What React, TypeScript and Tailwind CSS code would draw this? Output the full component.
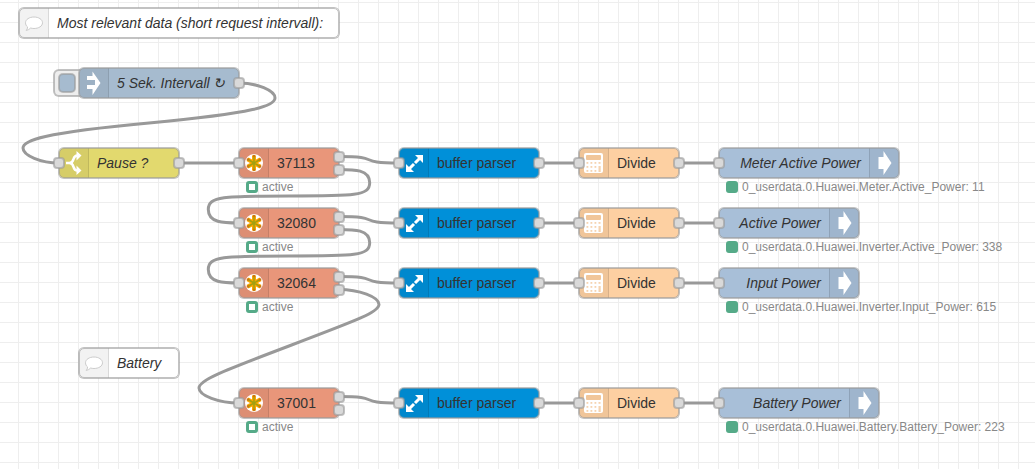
import type { ReactNode } from 'react'
import clsx from 'clsx'

type NodeType = 'comment' | 'inject' | 'switch' | 'knx' | 'parser' | 'calc' | 'out'

type FlowNode = {
  id: string
  type: NodeType
  label: string
  x: number
  y: number
  w: number
  status?: string
}

const NODE_HEIGHT = 30
const PORT_SPACING = 13

const nodes: FlowNode[] = [
  { id: 'c1', type: 'comment', label: 'Most relevant data (short request intervall):', x: 19, y: 8, w: 320 },
  { id: 'inject', type: 'inject', label: '5 Sek. Intervall ↻', x: 79, y: 68, w: 160 },
  { id: 'pause', type: 'switch', label: 'Pause ?', x: 59, y: 148, w: 120 },

  { id: 'k1', type: 'knx', label: '37113', x: 239, y: 148, w: 100, status: 'active' },
  { id: 'p1', type: 'parser', label: 'buffer parser', x: 399, y: 148, w: 140 },
  { id: 'd1', type: 'calc', label: 'Divide', x: 579, y: 148, w: 100 },
  { id: 'o1', type: 'out', label: 'Meter Active Power', x: 719, y: 148, w: 180, status: '0_userdata.0.Huawei.Meter.Active_Power: 11' },

  { id: 'k2', type: 'knx', label: '32080', x: 239, y: 208, w: 100, status: 'active' },
  { id: 'p2', type: 'parser', label: 'buffer parser', x: 399, y: 208, w: 140 },
  { id: 'd2', type: 'calc', label: 'Divide', x: 579, y: 208, w: 100 },
  { id: 'o2', type: 'out', label: 'Active Power', x: 719, y: 208, w: 140, status: '0_userdata.0.Huawei.Inverter.Active_Power: 338' },

  { id: 'k3', type: 'knx', label: '32064', x: 239, y: 268, w: 100, status: 'active' },
  { id: 'p3', type: 'parser', label: 'buffer parser', x: 399, y: 268, w: 140 },
  { id: 'd3', type: 'calc', label: 'Divide', x: 579, y: 268, w: 100 },
  { id: 'o3', type: 'out', label: 'Input Power', x: 719, y: 268, w: 140, status: '0_userdata.0.Huawei.Inverter.Input_Power: 615' },

  { id: 'c2', type: 'comment', label: 'Battery', x: 79, y: 348, w: 100 },

  { id: 'k4', type: 'knx', label: '37001', x: 239, y: 388, w: 100, status: 'active' },
  { id: 'p4', type: 'parser', label: 'buffer parser', x: 399, y: 388, w: 140 },
  { id: 'd4', type: 'calc', label: 'Divide', x: 579, y: 388, w: 100 },
  { id: 'o4', type: 'out', label: 'Battery Power', x: 719, y: 388, w: 160, status: '0_userdata.0.Huawei.Battery.Battery_Power: 223' },
]

// [source, output port, target]
const wires: [string, number, string][] = [
  ['inject', 0, 'pause'],
  ['pause', 0, 'k1'],
  ['k1', 0, 'p1'], ['p1', 0, 'd1'], ['d1', 0, 'o1'],
  ['k1', 1, 'k2'],
  ['k2', 0, 'p2'], ['p2', 0, 'd2'], ['d2', 0, 'o2'],
  ['k2', 1, 'k3'],
  ['k3', 0, 'p3'], ['p3', 0, 'd3'], ['d3', 0, 'o3'],
  ['k3', 1, 'k4'],
  ['k4', 0, 'p4'], ['p4', 0, 'd4'], ['d4', 0, 'o4'],
]

const types: Record<NodeType, { bg: string; inputs: number; outputs: number; italic?: boolean; alignRight?: boolean }> = {
  comment: { bg: 'bg-white', inputs: 0, outputs: 0, italic: true },
  inject: { bg: 'bg-[#a6bbcf]', inputs: 0, outputs: 1, italic: true },
  switch: { bg: 'bg-[#e2d96e]', inputs: 1, outputs: 1, italic: true },
  knx: { bg: 'bg-[#e9967a]', inputs: 1, outputs: 2 },
  parser: { bg: 'bg-[#0090d9]', inputs: 1, outputs: 1 },
  calc: { bg: 'bg-[#fdd0a2]', inputs: 1, outputs: 1 },
  out: { bg: 'bg-[#a8bfd8]', inputs: 1, outputs: 0, italic: true, alignRight: true },
}

const icons: Record<NodeType, ReactNode> = {
  comment: (
    <path
      d="M15 9c4.700 0 8.500 2.500 8.500 5.800S19.700 20.500 15 20.500c-1.200 0-2.300-.2-3.300-.5-1.200 1.300-2.700 2-4.500 2.500.9-1 1.300-2 1.400-3.500C7.300 18 6.500 16.500 6.500 14.800 6.500 11.500 10.300 9 15 9z"
      fill="#fff" stroke="#ccc"
    />
  ),
  inject: <path d="M8 8h5.500V3.500l8 11.500-8 12V21H8v-4h8v-5H8z" fill="#fff" />,
  switch: (
    <>
      <path d="M7 15h4M10.500 15c6-.5 2-7.500 8-7.500M10.500 15c6 .5 2 7.500 8 7.500" fill="none" stroke="#fff" strokeWidth="2.500" />
      <path d="M17.500 3l5 4.500-5 5zM17.500 17.500l5 5-5 4.500z" fill="#fff" />
    </>
  ),
  knx: (
    <>
      <circle cx="15" cy="15" r="9" fill="#fff" />
      <path d="M15 7.500v15M8.500 11.200l13 7.600M21.500 11.200l-13 7.600" stroke="#ffa500" strokeWidth="4" />
      <path d="M15 8v14M9 11.500l12 7M21 11.500l-12 7" stroke="#a0a010" strokeWidth="1.500" />
      <g fill="#c87814">
        <circle cx="15" cy="8" r="1.300" /><circle cx="15" cy="22" r="1.300" />
        <circle cx="9" cy="11.500" r="1.300" /><circle cx="21" cy="11.500" r="1.300" />
        <circle cx="9" cy="18.500" r="1.300" /><circle cx="21" cy="18.500" r="1.300" />
      </g>
    </>
  ),
  parser: (
    <>
      <path d="M16 7h8v8zM7 16v8h8z" fill="#fff" />
      <path d="M21 10l-5 5M15 16l-5 5" stroke="#fff" strokeWidth="3" />
    </>
  ),
  calc: (
    <>
      <rect x="5" y="5" width="19" height="20" rx="2" fill="#fff" />
      <rect x="7" y="7" width="15" height="5" rx="1" fill="#f1c69a" />
      <g fill="#f5d3b0">
        {[14, 18, 22].map(y => [7.5, 11.5, 15.5].map(x => <rect key={`${x}-${y}`} x={x} y={y} width="1.800" height="1.800" />))}
        <rect x="19.500" y="14" width="2" height="1.800" />
        <rect x="19.500" y="18" width="2.200" height="6" />
      </g>
    </>
  ),
  out: <path d="M8.500 9h5V3l8 12-8 12v-6h-5z" fill="#fff" />,
}

// Forward wires are one bezier, backward ones loop round through the midpoint
function linkPath(x1: number, y1: number, x2: number, y2: number) {
  const dx = x2 - x1
  const dy = y2 - y1
  const delta = Math.hypot(dx, dy)

  if (dx > 0) {
    const reach = delta < 100 ? 0.75 * delta : 75
    return `M${x1} ${y1}C${x1 + reach} ${y1} ${x2 - reach} ${y2} ${x2} ${y2}`
  }

  const scale = 0.4 - 0.2 * Math.max(0, (100 - Math.min(Math.abs(dx), Math.abs(dy))) / 100)
  const cpHeight = NODE_HEIGHT / 2
  const midX = Math.floor(x2 - dx / 2)
  const midY = Math.floor(y2 - dy / 2)
  const yq = (y2 + midY) / 2
  const topX = x1 + 100 * scale
  const topY = Math.min(yq - dy / 2, y1 + cpHeight)
  const bottomX = x2 - 100 * scale
  const bottomY = Math.max(yq, y2 - cpHeight)
  const cx = (x1 + topX) / 2
  const cp = [
    [cx, y1],
    [topX, Math.max(y1, topY - cpHeight)],
    [cx, Math.min(midY, topY + cpHeight)],
    [bottomX, Math.max(midY, bottomY - cpHeight)],
    [(x2 + bottomX) / 2, y2],
  ]
  if (cp[2][1] === topY + cpHeight) {
    if (Math.abs(dy) < cpHeight * 10) cp[1][1] = topY - cpHeight / 2
    cp[3][1] = bottomY - cpHeight / 2
  }
  return `M${x1} ${y1}C${cp[0]} ${cp[1]} ${topX} ${topY}S${cp[2]} ${midX} ${midY}S${cp[3]} ${bottomX} ${bottomY}S${cp[4]} ${x2} ${y2}`
}

function wirePath([from, port, to]: [string, number, string]) {
  const a = nodes.find(n => n.id === from)!
  const b = nodes.find(n => n.id === to)!
  const outputs = types[a.type].outputs
  const y1 = a.y + NODE_HEIGHT / 2 + (port - (outputs - 1) / 2) * PORT_SPACING
  return linkPath(a.x + a.w, y1, b.x, b.y + NODE_HEIGHT / 2)
}

function Ports({ count, side }: { count: number; side: 'left' | 'right' }) {
  return (
    <div className={clsx('absolute inset-y-0 flex flex-col justify-center gap-[3px]', side === 'left' ? '-left-[5px]' : '-right-[5px]')}>
      {Array.from({ length: count }, (_, i) => (
        <span key={i} className="size-[10px] rounded-[3px] border border-[#999]/60 bg-[#d9d9d9] ring-1 ring-[#999]/60" />
      ))}
    </div>
  )
}

function Status({ text, filled }: { text: string; filled: boolean }) {
  return (
    <div className="absolute top-full left-[7px] flex items-center gap-1 pt-[2px] text-xs leading-[14px] whitespace-nowrap text-[#888]">
      <span className={clsx('size-3 rounded-[3px] border-3 border-[#55aa88]', filled ? 'bg-[#55aa88]' : 'bg-white')} />
      <span>{text}</span>
    </div>
  )
}

function FlowNodeView({ node }: { node: FlowNode }) {
  const { bg, inputs, outputs, italic, alignRight } = types[node.type]
  return (
    <div className="absolute" style={{ left: node.x, top: node.y, width: node.w }}>
      {node.type === 'inject' && (
        <button aria-label="Inject" className="absolute top-[2px] -left-[25px] h-[26px] w-8 rounded-[5px] border border-[#999]/60 bg-[#eee] pl-1 ring-1 ring-[#999]/60">
          <span className="block h-[18px] w-4 rounded-[4px] border border-[#999]/60 bg-[#a6bbcf] ring-1 ring-[#999]/60" />
        </button>
      )}
      <div className={clsx('relative flex h-[30px] items-center overflow-hidden rounded-[5px]', bg, alignRight && 'flex-row-reverse')}>
        <div className={clsx('h-full w-[30px] shrink-0 border-black/10 bg-black/5', alignRight ? 'border-l' : 'border-r')}>
          <svg width="30" height="30" viewBox="0 0 30 30">{icons[node.type]}</svg>
        </div>
        <span className={clsx('px-2 text-sm whitespace-nowrap text-[#333]', italic && 'italic')}>{node.label}</span>
      </div>
      <div className="pointer-events-none absolute inset-0 rounded-[5px] border border-[#999]/60 ring-1 ring-[#999]/60" />
      <Ports count={inputs} side="left" />
      <Ports count={outputs} side="right" />
      {node.status && <Status text={node.status} filled={node.type === 'out'} />}
    </div>
  )
}

export default function App() {
  return (
    <main className="relative min-h-screen overflow-hidden bg-white bg-[linear-gradient(to_right,#eee_1px,transparent_1px),linear-gradient(to_bottom,#eee_1px,transparent_1px)] bg-[size:20px_20px] bg-[position:18px_2px] font-['Liberation_Sans',Arial,sans-serif]">
      <svg className="absolute inset-0 h-full w-full" fill="none" stroke="#999" strokeWidth="3">
        {wires.map(wire => <path key={wire.join('-')} d={wirePath(wire)} />)}
      </svg>
      {nodes.map(node => <FlowNodeView key={node.id} node={node} />)}
    </main>
  )
}
